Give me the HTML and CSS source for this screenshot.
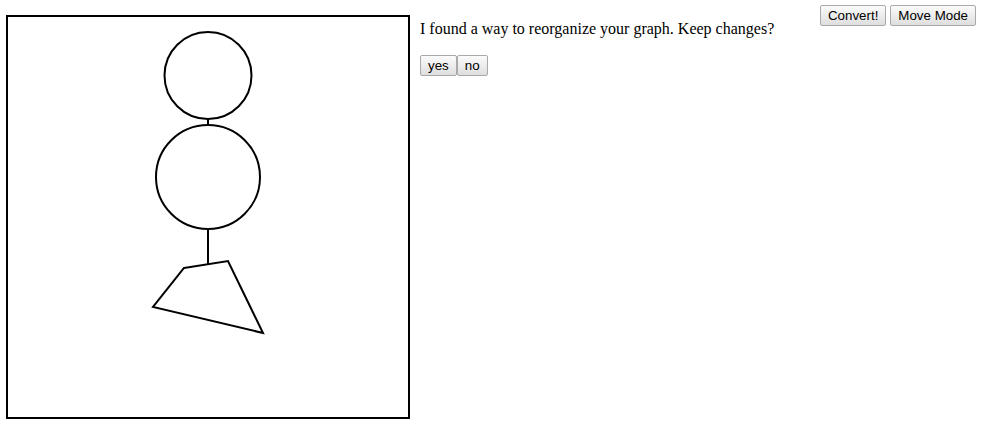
FILE: index.html
```html
<!DOCTYPE html>
<html>
<head>
<meta charset="utf-8">
<link rel="stylesheet" href="styles.css">
</head>
<body>
<div class="app">
  <div class="board">
    <svg class="graph" width="400" height="400" viewBox="8 17 400 400">
      <g fill="none" stroke="#000" stroke-width="2">
        <line x1="208" y1="119" x2="208" y2="125"/>
        <line x1="208" y1="229" x2="208" y2="264"/>
        <circle cx="208" cy="75.5" r="43.5"/>
        <circle cx="208" cy="177" r="52"/>
        <polygon points="184,268 228,261 263,333 153,307" stroke-linejoin="miter"/>
      </g>
    </svg>
  </div>
  <div class="panel">
    <p class="message">I found a way to reorganize your graph. Keep changes?</p>
    <div class="choices"><button class="btn">yes</button><button class="btn">no</button></div>
  </div>
  <div class="toolbar">
    <button class="btn">Convert!</button>
    <button class="btn">Move Mode</button>
  </div>
</div>
</body>
</html>
```
FILE: styles.css
```css
html, body {
  margin: 0;
  padding: 0;
  background: #fff;
}
body {
  font-family: "Liberation Serif", "Times New Roman", serif;
  font-size: 16px;
  color: #000;
}
.app {
  display: flex;
  align-items: flex-start;
  padding: 5px 6px 0 6px;
}
.board {
  margin-top: 10px;
  width: 400px;
  height: 400px;
  border: 2px solid #000;
  flex: none;
}
.graph {
  display: block;
}
.panel {
  margin-left: 10px;
  padding-top: 15px;
}
.message {
  margin: 0 0 17px 0;
  line-height: 17.7px;
}
.choices {
  display: flex;
}
.toolbar {
  margin-left: auto;
  display: flex;
  gap: 4px;
}
.btn {
  font-family: "Liberation Sans", Arial, sans-serif;
  font-size: 13.333px;
  color: #000;
  height: 21px;
  padding: 0 7px;
  border: 1px solid #a9a9a9;
  border-radius: 2px;
  background: linear-gradient(#fbfbfb, #dedede);
  line-height: 19px;
  margin: 0;
}
```
